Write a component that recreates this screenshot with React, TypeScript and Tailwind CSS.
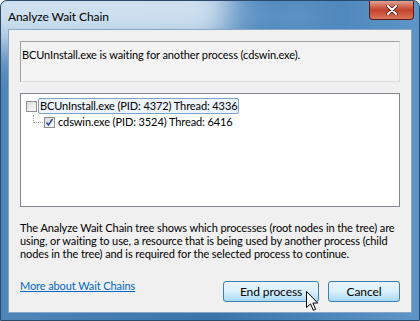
const FONT = { fontFamily: 'Lato, "Liberation Sans", Arial, sans-serif' };

function Checkbox({ checked }: { checked?: boolean }) {
    return (
        <span className="w-[11px] h-[11px] border border-[#8f8f8f] bg-gradient-to-br from-[#dcdcdc] to-[#fbfbfb] flex items-center justify-center shrink-0">
            {checked && (
                <svg width="9" height="9" viewBox="0 0 9 9">
                    <path d="M1.5 4.5 L3.5 7 L7.5 1" fill="none" stroke="#2a4a9a" strokeWidth="1.5" />
                </svg>
            )}
        </span>
    );
}

function Button({ label, wide }: { label: string; wide?: boolean }) {
    return (
        <button
            className={
                "h-[21px] rounded-[3px] border border-[#3c7fb1] text-[12px] text-black bg-gradient-to-b from-[#eaf6fd] via-[#d9f0fc] to-[#a7d9f5] " +
                (wide ? "w-[96px]" : "w-[72px]")
            }
        >
            {label}
        </button>
    );
}

export default function App() {
    return (
        <div className="w-[420px] h-[321px] overflow-hidden bg-[#f0f0f0] tracking-[-0.1px]" style={FONT}>
            <div className="relative w-full h-full rounded-t-[7px] border border-[#2b4a6a] bg-gradient-to-r from-[#4f86ba] via-[#3a74ab] to-[#5d95c8] overflow-hidden">
                {/* glass glow behind the caption */}
                <div className="absolute -left-10 -top-8 w-[280px] h-[80px] rounded-full bg-[#d8e7f4] blur-[18px] opacity-95" />
                <div className="absolute left-[230px] top-0 w-[90px] h-[30px] bg-[#6ea2d2] blur-[14px] opacity-70" />

                {/* title bar */}
                <div className="relative h-[28px] flex items-start justify-between pl-[7px]">
                    <span className="text-[12px] text-black mt-[7px]">Analyze Wait Chain</span>
                    <div className="mr-[5px] w-[45px] h-[19px] rounded-b-[4px] border border-t-0 border-[#5a1d1d] bg-gradient-to-b from-[#e0a090] via-[#c2402a] to-[#d9755a] flex items-center justify-center">
                        <svg width="12" height="10" viewBox="0 0 12 10">
                            <path d="M2 1 L10 9 M10 1 L2 9" stroke="#3a0d0d" strokeWidth="3.2" strokeLinecap="round" />
                            <path d="M2 1 L10 9 M10 1 L2 9" stroke="#ffffff" strokeWidth="2" strokeLinecap="round" />
                        </svg>
                    </div>
                </div>

                {/* client area */}
                <div className="relative mx-[7px] h-[284px] border border-[#8aa6c4] bg-[#f0f0f0] px-[11px] pt-[11px] flex flex-col text-[11px]">
                    <div className="h-[41px] border border-[#a0a0a0] border-r-[#dcdcdc] border-b-[#dcdcdc] bg-[#f3f3f3] px-[1px] pt-[5px] text-black">
                        BCUnInstall.exe is waiting for another process (cdswin.exe).
                    </div>

                    <div className="mt-[11px] h-[114px] border border-[#828790] bg-white pt-[4px] pl-[5px] text-black">
                        <div className="flex items-center h-[16px]">
                            <Checkbox />
                            <span className="ml-[1px] px-[1px] border border-[#7da2ce] rounded-[2px] bg-[#eef5fc] leading-[14px]">
                                BCUnInstall.exe (PID: 4372) Thread: 4336
                            </span>
                        </div>
                        <div className="flex items-center h-[16px]">
                            <span className="w-[10px] h-[8px] ml-[7px] border-l border-b border-dotted border-[#a0a0a0] -mt-[7px]" />
                            <span className="ml-[1px]"><Checkbox checked /></span>
                            <span className="ml-[3px] leading-[14px]">cdswin.exe (PID: 3524) Thread: 6416</span>
                        </div>
                    </div>

                    <p className="mt-[14px] leading-[13px] text-black">
                        The Analyze Wait Chain tree shows which processes (root nodes in the tree) are using, or waiting to use, a resource that is being used by another process (child nodes in the tree) and is required for the selected process to continue.
                    </p>

                    <div className="mt-auto mb-[10px] flex items-end justify-between">
                        <a className="text-[#0066cc] underline mb-[8px]">More about Wait Chains</a>
                        <div className="flex gap-[9px]">
                            <Button label="End process" wide />
                            <Button label="Cancel" />
                        </div>
                    </div>

                    {/* mouse pointer over the focused button */}
                    <svg className="absolute left-[297px] top-[261px]" width="13" height="21" viewBox="0 0 13 21">
                        <path d="M0.5 0.5 L0.5 16.5 L4.5 12.8 L7.3 19.3 L9.6 18.3 L6.9 12 L11.8 12 Z" fill="#ffffff" stroke="#000000" strokeWidth="1" strokeLinejoin="miter" />
                    </svg>
                </div>
            </div>
        </div>
    );
}
